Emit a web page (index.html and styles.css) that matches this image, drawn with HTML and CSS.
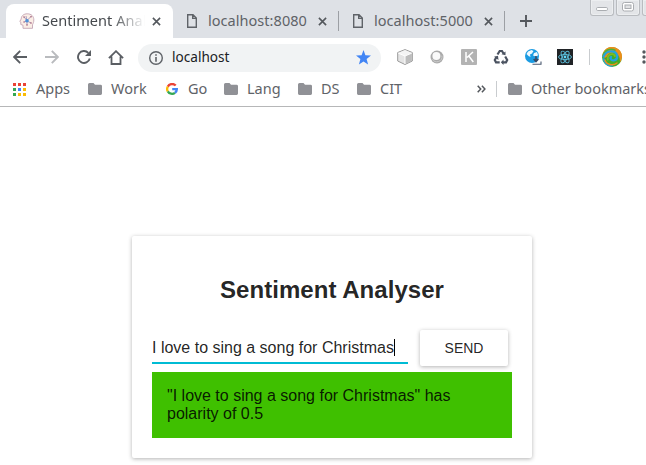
FILE: index.html
```html
<!DOCTYPE html>
<html lang="en">
<head>
<meta charset="utf-8">
<title>Sentiment Analyser</title>
<link rel="stylesheet" href="styles.css">
</head>
<body>
<svg width="0" height="0" class="defs">
  <symbol id="folder" viewBox="0 0 14 12"><path d="M0 1.5Q0 0 1.5 0H5.5L7 1.8H12.6Q14 1.8 14 3.2V10.6Q14 12 12.6 12H1.4Q0 12 0 10.6Z" fill="#909196"/></symbol>
  <symbol id="page" viewBox="0 0 12 16"><path d="M1.7 1.7H7L10.3 5V14.3H1.7ZM6.7 1.7V5.4H10.3" fill="none" stroke="#5f6368" stroke-width="1.4"/></symbol>
  <symbol id="close" viewBox="0 0 9 9"><path d="M.9.9 8.1 8.1M8.1.9.9 8.1" stroke="#54585d" stroke-width="1.6"/></symbol>
</svg>
<header class="browser">
  <div class="tabs">
    <div class="tab active">
      <svg class="favicon" width="16" height="16" viewBox="0 0 16 16"><path d="M4 15.300V12.200L1.800 11.500V9.200L.8 8.500 2.200 6C2.200 2.800 4.800.8 8.200.8c4.200 0 6.600 2.500 6.600 6 0 2.400-.6 3.500-1.300 5v3.500Z" fill="#fbeee6" stroke="#c3a5b4" stroke-width=".9"/><path d="M5 4 8 7.500l4-4M8 8v4M5 9l3-1 4 2M7 3l1 5" stroke="#8b7cab" stroke-width=".7" fill="none"/><circle cx="8" cy="7.700" r="1.800" fill="#4d91d8"/><g fill="#a4607c"><circle cx="5" cy="4" r=".8"/><circle cx="12" cy="3.800" r=".8"/><circle cx="5" cy="9" r=".7"/><circle cx="12" cy="10" r=".8"/><circle cx="8" cy="12" r=".8"/></g></svg>
      <span class="title">Sentiment Analyser</span>
      <svg class="close" width="9" height="9"><use href="#close"/></svg>
    </div>
    <div class="tab">
      <svg class="doc" width="12" height="16"><use href="#page"/></svg>
      <span class="title">localhost:8080</span>
      <svg class="close" width="9" height="9"><use href="#close"/></svg>
    </div>
    <div class="tab">
      <svg class="doc" width="12" height="16"><use href="#page"/></svg>
      <span class="title">localhost:5000</span>
      <svg class="close" width="9" height="9"><use href="#close"/></svg>
    </div>
    <svg class="plus" width="12" height="12" viewBox="0 0 12 12"><path d="M6 0V12M0 6H12" stroke="#54585d" stroke-width="1.900"/></svg>
    <div class="window-buttons">
      <span><svg width="12" height="14" viewBox="0 0 12 14"><rect x=".5" y="7.500" width="11" height="3" rx="1.200" fill="#fff" stroke="#aaadb1"/></svg></span>
      <span><svg width="12" height="14" viewBox="0 0 12 14"><rect x=".5" y="2.500" width="11" height="8.500" rx="2" fill="#fff" stroke="#aaadb1"/><rect x="3" y="5" width="6" height="3.500" fill="#e1e2e4" stroke="#aaadb1"/></svg></span>
      <span></span>
    </div>
  </div>
  <div class="toolbar">
    <svg class="nav" width="14" height="14" viewBox="0 0 14 14"><path d="M14 7H1.500M7.200.9 1.200 7l6 6.100" stroke="#5a5e63" stroke-width="1.900" fill="none"/></svg>
    <svg class="nav" width="14" height="14" viewBox="0 0 14 14"><path d="M0 7H12.500M6.800.9l6 6.100-6 6.100" stroke="#b9bbbe" stroke-width="1.900" fill="none"/></svg>
    <svg class="nav" width="14" height="14" viewBox="0 0 14 14"><path d="M12.800 8.600A6 6 0 1 1 11.300 2.800" stroke="#5a5e63" stroke-width="1.900" fill="none"/><path d="M14 0V6H8Z" fill="#5a5e63"/></svg>
    <svg class="home" width="16" height="15" viewBox="0 0 16 15"><path d="M.9 8.200 8 1.200l7.100 7M3.500 6.500V14H12.500V6.500" stroke="#5a5e63" stroke-width="1.800" fill="none"/></svg>
    <div class="address">
      <svg width="14" height="14" viewBox="0 0 14 14"><circle cx="7" cy="7" r="6.300" fill="none" stroke="#5f6368" stroke-width="1.400"/><path d="M7 3.200V4.800M7 6V10.700" stroke="#5f6368" stroke-width="1.600"/></svg>
      <span>localhost</span>
      <svg class="star" width="15" height="15" viewBox="0 0 15 15"><path d="M7.500 0 9.400 5.200 15 5.500 10.600 9 12.100 14.500 7.500 11.400 2.900 14.500 4.400 9 0 5.500 5.600 5.200Z" fill="#4285f4"/></svg>
    </div>
    <div class="extensions">
      <svg width="16" height="16" viewBox="0 0 16 16"><path d="M8 .6 15.300 3.500V12L8 15.500.7 12V3.500Z" fill="#e4e4e4" stroke="#999" stroke-width="1"/><path d="M1.200 4 8 1.100 14.800 4 8 7Z" fill="#f4f4f4"/><path d="M8 7 14.800 4V11.700L8 15Z" fill="#bdbdbd"/><path d="M1.300 4.200 8 7l6.700-2.800M8 7v8" stroke="#fff" fill="none"/></svg>
      <svg width="16" height="16" viewBox="0 0 16 16"><circle cx="8" cy="8" r="6.500" fill="#aaa"/><circle cx="7.400" cy="7" r="4" fill="#fafafa"/><path d="M3.500 10A5 5 0 0 0 12.800 6.500" fill="none" stroke="#ccc" stroke-width="1"/></svg>
      <svg width="16" height="16" viewBox="0 0 16 16"><rect width="16" height="16" rx="1" fill="#b3b3b3"/><path d="M5 3V13M12 3 6 8.500M7.800 7 12.300 13" stroke="#fff" stroke-width="1.500" fill="none"/></svg>
      <svg width="16" height="16" viewBox="0 0 16 16"><g fill="none" stroke="#4b5361" stroke-width="2.200"><path d="M4.500 5.500 6.700 2H9L10.500 4.500"/><path d="M12.200 7.500 14.200 11 13 13.300H9.500"/><path d="M6.700 13.300H3L1.800 11 3.500 8"/></g><path d="M8.500 5.200 12.500 6.200V2.500ZM10.500 10.500V16L7.800 13.200ZM1 7.800 5 6.800 5.500 11Z" fill="#4b5361"/></svg>
      <svg class="globe" width="17" height="16" viewBox="0 0 17 16"><circle cx="7" cy="7" r="7" fill="#1b9be2"/><path d="M3 2.500 6.500 1 8.500 2 7 4.500 5 5.500 5.500 8 3.500 7 1.500 5ZM9 4 12 3 13 6 11.500 8 9.500 7 8 6.500Z" fill="#eef9ff"/><path d="M11 7V12M8.700 10 11 12.500 13.300 10" stroke="#354a68" stroke-width="1.700" fill="none"/><path d="M7.500 15.300H16V12.500" stroke="#4b5970" stroke-width="1.100" fill="none"/></svg>
      <svg width="16" height="16" viewBox="0 0 16 16"><rect width="16" height="16" fill="#202326"/><g fill="none" stroke="#5bbfdc" stroke-width=".9"><ellipse cx="8" cy="8" rx="6.500" ry="2.600"/><ellipse cx="8" cy="8" rx="6.500" ry="2.600" transform="rotate(60 8 8)"/><ellipse cx="8" cy="8" rx="6.500" ry="2.600" transform="rotate(120 8 8)"/></g><circle cx="8" cy="8" r="1.400" fill="#61dafb"/></svg>
    </div>
    <i class="divider"></i>
    <svg class="avatar" width="20" height="20" viewBox="0 0 20 20"><circle cx="10" cy="10" r="10" fill="#42ad2b"/><path d="M2 4A10 10 0 0 1 20 10Q19.500 13 18 15.500 18.500 8 13 6 7 4.500 4.500 10Q2 12 .3 8.500.8 6 2 4Z" fill="#ee8d19"/><g fill="none" stroke-linecap="round"><path d="M1.300 8.500C2.500 3.500 8 .8 13 3.200" stroke="#4cb33a" stroke-width="1.600"/><path d="M1.500 9.500C3.500 5 8 3.800 11.500 4.700 16 6 16.500 12 12.500 13.200 9.500 14 7.800 11.500 9 9.900" stroke="#24a4dc" stroke-width="2.300"/><path d="M1.800 12C2.500 16 6 19 10 18.700" stroke="#24a4dc" stroke-width="2"/><path d="M3 13C4.500 18 11 19 15 16" stroke="#ee8d19" stroke-width="1.400"/><path d="M5.800 12.500C5 7 11.500 5.500 13 9" stroke="#7fba22" stroke-width="2"/></g></svg>
    <svg class="more" width="4" height="14" viewBox="0 0 4 14"><g fill="#54585d"><circle cx="2" cy="2" r="1.700"/><circle cx="2" cy="7" r="1.700"/><circle cx="2" cy="12" r="1.700"/></g></svg>
  </div>
  <nav class="bookmarks">
    <a class="mark apps"><svg width="13" height="13" viewBox="0 0 13 13"><path d="M0 0h3v3H0zM5 0h3v3H5zM10 0h3v3h-3z" fill="#ea4335"/><path d="M0 5h3v3H0zM0 10h3v3H0z" fill="#34a853"/><path d="M5 5h3v3H5z" fill="#4285f4"/><path d="M10 5h3v3h-3zM10 10h3v3h-3zM5 10h3v3H5z" fill="#fbbc05"/></svg>Apps</a>
    <a class="mark work"><svg width="14" height="12"><use href="#folder"/></svg>Work</a>
    <a class="mark go"><svg width="12" height="12" viewBox="0 0 12 12"><g fill="none" stroke-width="2.300"><path d="M9.700 2.600A4.850 4.850 0 0 0 1.800 3.600" stroke="#ea4335"/><path d="M1.800 3.600A4.850 4.850 0 0 0 1.800 8.400" stroke="#fbbc05"/><path d="M1.800 8.400A4.850 4.850 0 0 0 9 9.800" stroke="#34a853"/><path d="M9 9.800A4.850 4.850 0 0 0 10.850 6.100H6.200" stroke="#4285f4"/></g></svg>Go</a>
    <a class="mark lang"><svg width="14" height="12"><use href="#folder"/></svg>Lang</a>
    <a class="mark ds"><svg width="14" height="12"><use href="#folder"/></svg>DS</a>
    <a class="mark cit"><svg width="14" height="12"><use href="#folder"/></svg>CIT</a>
    <svg class="overflow" width="9" height="8" viewBox="0 0 9 8"><path d="M.7.7 3.700 4 .7 7.300M4.900.7 7.900 4 4.900 7.300" stroke="#54585d" stroke-width="1.500" fill="none"/></svg>
    <i class="divider"></i>
    <a class="mark other"><svg width="14" height="12"><use href="#folder"/></svg>Other bookmarks</a>
  </nav>
</header>
<main>
  <section class="card">
    <h2>Sentiment Analyser</h2>
    <div class="form">
      <div class="field"><span>I love to sing a song for Christmas</span><i class="caret"></i></div>
      <button>SEND</button>
    </div>
    <div class="result">"I love to sing a song for Christmas" has polarity of 0.5</div>
  </section>
</main>
</body>
</html>
```
FILE: styles.css
```css
* { box-sizing: border-box; }
body { margin: 0; width: 646px; height: 465px; overflow: hidden; background: #fff; font-family: "Liberation Sans", Arial, sans-serif; }
svg { display: block; flex: none; }
.defs { position: absolute; }
.browser { height: 107px; border-bottom: 1px solid #b6b7b8; font: 14.5px/20px "Noto Sans", sans-serif; color: #5f6368; overflow: hidden; }
.tabs { height: 38px; display: flex; background: #dee1e6; padding-left: 6px; }
.tab { flex: none; height: 34px; margin-top: 4px; width: 166px; display: flex; align-items: center; padding-left: 13px; }
.tab.active { width: 167px; background: #fff; border-radius: 8px 8px 0 0; color: #45494d; }
.tab:not(.active) { background: linear-gradient(#9c9fa4, #9c9fa4) right 7px / 1px 20px no-repeat; }
.favicon { margin-right: 7px; }
.doc { margin-right: 10px; }
.title { white-space: nowrap; overflow: hidden; width: 110px; padding-bottom: 2px; letter-spacing: .04px; }
.active .title { width: 103px; margin-right: 7px; -webkit-mask-image: linear-gradient(90deg, #000 70px, transparent 103px); mask-image: linear-gradient(90deg, #000 70px, transparent 103px); }
.plus { margin: 15px 58px 0 15px; }
.window-buttons { display: flex; gap: 2px; flex: none; }
.window-buttons span { flex: none; width: 24px; height: 16px; border: 1px solid #b9bcc0; border-top: 0; border-radius: 0 0 3px 3px; background: #e3e5e8; display: flex; justify-content: center; box-shadow: inset 0 0 0 1px #eceef0; }
.toolbar { height: 34px; display: flex; align-items: center; padding: 4px 0 0 13px; }
.toolbar > .nav { margin-right: 18px; }
.toolbar > .home { margin-left: -1px; }
.address { flex: none; width: 243px; height: 28px; margin: 1px 16px 0 14px; border-radius: 14px; background: #f1f3f4; padding: 0 10px 0 11px; display: flex; align-items: center; color: #202124; font-size: 13.6px; }
.address span { margin-left: 9px; flex: 1; padding-bottom: 2px; }
.extensions { display: flex; gap: 16px; flex: none; }
.globe { margin-right: -1px; }
.divider { width: 1px; height: 16px; background: #c9cccf; flex: none; }
.toolbar .divider { margin: 0 12px 0 16px; }
.more { margin-left: 20px; }
.bookmarks { height: 34px; display: flex; align-items: center; padding-left: 13px; }
.mark { display: flex; align-items: center; gap: 9px; white-space: nowrap; flex: none; padding-bottom: 2px; }
.mark svg { margin-top: 2px; }
.apps { width: 75px; gap: 10px; }
.work { width: 78px; }
.go { width: 58px; gap: 10px; }
.lang { width: 74px; }
.ds { width: 59px; }
.cit { width: 120px; }
.overflow { margin-right: 10px; }
.bookmarks .divider { margin-right: 11px; }
main { display: flex; justify-content: center; padding: 129px 0 0 18px; }
.card { width: 400px; height: 222px; padding: 20px; border-radius: 2px; box-shadow: 0 1px 4px rgba(0,0,0,.3); color: rgba(0,0,0,.87); font-size: 16px; line-height: 18px; }
h2 { margin: 20px 0 27px; font-size: 24px; line-height: 27px; text-align: center; letter-spacing: .04px; }
.form { display: flex; gap: 12px; height: 42px; }
.field { width: 256px; height: 34px; border-bottom: 2px solid #00bcd4; display: flex; align-items: center; padding-top: 3px; white-space: nowrap; }
.caret { width: 1px; height: 17px; background: #000; }
button { width: 88px; height: 36px; border: 0; padding: 0; border-radius: 2px; background: #fff; color: rgba(0,0,0,.87); font: 14px "Liberation Sans", Arial, sans-serif; box-shadow: 0 1px 4px rgba(0,0,0,.3); }
.result { height: 66px; background: #3fc000; padding: 15px; }
```
